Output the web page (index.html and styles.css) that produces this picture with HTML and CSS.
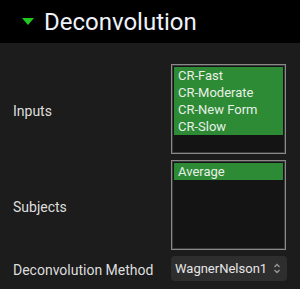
FILE: index.html
```html
<!DOCTYPE html>
<html lang="en">
<head>
  <meta charset="UTF-8">
  <meta name="viewport" content="width=device-width, initial-scale=1.0">
  <title>Deconvolution</title>
  <link rel="stylesheet" href="styles.css">
</head>
<body>
  <div class="panel-header">
    <span class="caret"></span>
    <h2>Deconvolution</h2>
  </div>

  <div class="form-grid">
    <label class="field-label">Inputs</label>
    <div class="listbox">
      <div class="list-item selected">CR-Fast</div>
      <div class="list-item selected">CR-Moderate</div>
      <div class="list-item selected">CR-New Form</div>
      <div class="list-item selected">CR-Slow</div>
    </div>

    <label class="field-label">Subjects</label>
    <div class="listbox">
      <div class="list-item selected">Average</div>
    </div>

    <label class="field-label">Deconvolution Method</label>
    <div class="select-box">
      <span>WagnerNelson1</span>
      <svg class="spinner" width="8" height="13" viewBox="0 0 8 13">
        <path d="M1.5 5 L4 2.5 L6.5 5" fill="none" stroke="#9a9a9a" stroke-width="1.3"/>
        <path d="M1.5 8 L4 10.5 L6.5 8" fill="none" stroke="#9a9a9a" stroke-width="1.3"/>
      </svg>
    </div>
  </div>
</body>
</html>
```

FILE: styles.css
```css
body {
  margin: 0;
  padding: 0;
  width: 300px;
  height: 289px;
  background-color: #1c1c1c;
  font-family: Roboto, "Noto Sans", sans-serif;
  color: #e0e0e0;
  overflow: hidden;
}

.panel-header {
  height: 43px;
  background-color: #000000;
  display: flex;
  align-items: center;
  padding-left: 22px;
}

.caret {
  width: 0;
  height: 0;
  border-left: 6.5px solid transparent;
  border-right: 6.5px solid transparent;
  border-top: 7px solid #1fc91f;
  margin-right: 10px;
  margin-top: -1px;
}

.panel-header h2 {
  margin: 0;
  font-size: 24px;
  font-weight: 400;
  color: #eef2fa;
}

.form-grid {
  display: grid;
  grid-template-columns: 158px 115px;
  row-gap: 6px;
  align-items: center;
  padding: 21px 0 0 13px;
}

.field-label {
  font-size: 14px;
  color: #dedede;
  padding-top: 3px;
}

.listbox {
  box-sizing: border-box;
  width: 115px;
  height: 90px;
  border: 1px solid #8a8a8a;
  box-shadow: inset 0 0 0 1px #3a3a3a;
  padding: 2px;
  background-color: #141414;
}

.list-item {
  font-size: 13px;
  line-height: 17px;
  padding-left: 4px;
  color: #e8f0e8;
}

.list-item.selected {
  background-color: #2d8a35;
}

.select-box {
  box-sizing: border-box;
  width: 116px;
  height: 25px;
  background-color: #2e2e2e;
  border-radius: 4px;
  display: flex;
  align-items: center;
  justify-content: space-between;
  padding: 0 6px 0 4px;
  font-size: 13px;
  color: #e6e6e6;
}

.spinner {
  display: block;
}
```
